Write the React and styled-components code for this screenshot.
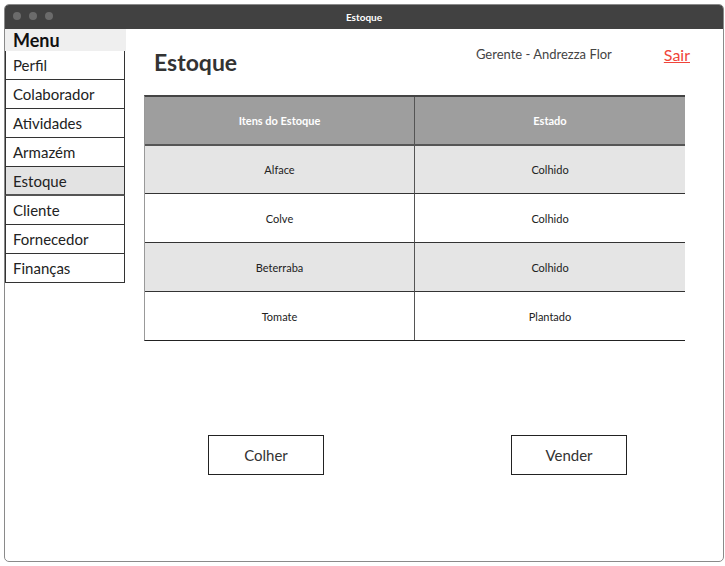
import React from "react";
import styled, { createGlobalStyle } from "styled-components";

const GlobalStyle = createGlobalStyle`
  body {
    margin: 0;
    background: #ffffff;
    font-family: Lato, "Liberation Sans", sans-serif;
  }
`;

/**
 * 창 틀
 */
const Window = styled.div`
  margin: 4px 0 0 4px;
  width: 718px;
  height: 556px;
  border: 1px solid #8a8a8a;
  border-radius: 5px;
  overflow: hidden;
  display: flex;
  flex-direction: column;
  background: #fff;
`;

const TitleBar = styled.div`
  height: 24px;
  background: #414141;
  display: flex;
  align-items: center;
  justify-content: center;
  position: relative;
  color: #fff;
  font-size: 10px;
  font-weight: 700;
`;

const Dots = styled.div`
  position: absolute;
  left: 8px;
  top: 7px;
  display: flex;
  gap: 8px;
`;

const Dot = styled.span`
  width: 8px;
  height: 8px;
  border-radius: 50%;
  background: #6b6b6b;
`;

const Body = styled.div`
  flex: 1;
  display: flex;
`;

/**
 * 사이드 메뉴
 */
const Sidebar = styled.nav`
  width: 121px;
  display: flex;
  flex-direction: column;
`;

const MenuTitle = styled.div`
  height: 22px;
  background: #efefef;
  padding-left: 8px;
  font-size: 18px;
  font-weight: 700;
  line-height: 23px;
  color: #111;
`;

const MenuItem = styled.div`
  height: 29px;
  margin-right: 1px;
  box-sizing: border-box;
  border: 1px solid #333;
  border-top: none;
  border-bottom-width: ${(p) => (p.active ? "2px" : "1px")};
  border-bottom-color: ${(p) => (p.active ? "#555" : "#333")};
  background: ${(p) => (p.active ? "#e3e3e3" : "#fff")};
  padding-left: 7px;
  font-size: 15px;
  line-height: 29px;
  color: #222;
  &:first-of-type {
    border-top: 1px solid #333;
  }
`;

const Main = styled.main`
  flex: 1;
  padding-left: 18px;
  display: flex;
  flex-direction: column;
`;

const Header = styled.header`
  height: 66px;
  display: flex;
  align-items: flex-start;
`;

const Title = styled.h1`
  margin: 19px 0 0 10px;
  font-size: 23px;
  font-weight: 700;
  color: #333;
`;

const User = styled.span`
  margin: 17px 0 0 auto;
  font-size: 13px;
  color: #444;
`;

const Logout = styled.a`
  margin: 16px 33px 0 52px;
  font-size: 16px;
  color: #f0443a;
  text-decoration: underline;
`;

/**
 * 재고 표
 */
const Table = styled.div`
  width: 541px;
  display: grid;
  grid-template-columns: 269px 271px;
  border-top: 2px solid #444;
  border-bottom: 1px solid #222;
  border-left: 1px solid #999;
  box-sizing: border-box;
`;

const Cell = styled.div`
  height: ${(p) => (p.head ? "47px" : p.afterHead ? "47px" : "48px")};
  display: flex;
  align-items: center;
  justify-content: center;
  font-size: 11px;
  font-weight: ${(p) => (p.head ? 700 : 400)};
  color: ${(p) => (p.head ? "#fff" : "#222")};
  background: ${(p) => (p.head ? "#9e9e9e" : p.shade ? "#e5e5e5" : "#fff")};
  border-top: ${(p) => (p.first ? "none" : p.afterHead ? "2px solid #555" : "1px solid #333")};
  border-left: ${(p) => (p.second ? "1px solid #555" : "none")};
`;

const Actions = styled.div`
  display: flex;
  gap: 187px;
  padding-left: 64px;
  margin-top: 94px;
`;

const ActionButton = styled.button`
  width: 116px;
  height: 40px;
  border: 1px solid #222;
  background: #fff;
  font-family: inherit;
  font-size: 15px;
  color: #333;
  cursor: pointer;
`;

const menu = [
  "Perfil",
  "Colaborador",
  "Atividades",
  "Armazém",
  "Estoque",
  "Cliente",
  "Fornecedor",
  "Finanças",
];

const rows = [
  ["Alface", "Colhido"],
  ["Colve", "Colhido"],
  ["Beterraba", "Colhido"],
  ["Tomate", "Plantado"],
];

const App = () => {
  return (
    <>
      <GlobalStyle />
      <Window>
        <TitleBar>
          <Dots>
            <Dot />
            <Dot />
            <Dot />
          </Dots>
          Estoque
        </TitleBar>
        <Body>
          <Sidebar>
            <MenuTitle>Menu</MenuTitle>
            {menu.map((m) => (
              <MenuItem key={m} active={m === "Estoque"}>
                {m}
              </MenuItem>
            ))}
          </Sidebar>
          <Main>
            <Header>
              <Title>Estoque</Title>
              <User>Gerente - Andrezza Flor</User>
              <Logout href="#">Sair</Logout>
            </Header>
            <Table>
              <Cell head first>
                Itens do Estoque
              </Cell>
              <Cell head first second>
                Estado
              </Cell>
              {rows.map(([item, state], i) => (
                <React.Fragment key={item}>
                  <Cell shade={i % 2 === 0} afterHead={i === 0}>
                    {item}
                  </Cell>
                  <Cell shade={i % 2 === 0} afterHead={i === 0} second>
                    {state}
                  </Cell>
                </React.Fragment>
              ))}
            </Table>
            <Actions>
              <ActionButton>Colher</ActionButton>
              <ActionButton>Vender</ActionButton>
            </Actions>
          </Main>
        </Body>
      </Window>
    </>
  );
};

export default App;
